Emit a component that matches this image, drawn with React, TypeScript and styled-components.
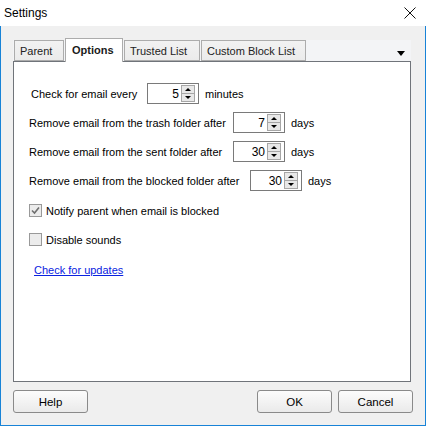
import React from "react";
import styled, { createGlobalStyle } from "styled-components";

const GlobalStyle = createGlobalStyle`
  html, body {
    margin: 0;
    padding: 0;
    background: #ffffff;
  }
  body {
    font-family: "Liberation Sans", Arial, sans-serif;
    font-size: 11px;
    color: #000000;
  }
  * {
    box-sizing: border-box;
  }
`;

const Window = styled.div`
  width: 426px;
  height: 426px;
  display: flex;
  flex-direction: column;
  background: #ffffff;
`;

const TitleBar = styled.div`
  height: 26px;
  flex: none;
  display: flex;
  align-items: center;
  justify-content: space-between;
  padding: 0 10px 0 4px;
  background: #ffffff;
`;

const Title = styled.span`
  font-size: 12px;
  margin-top: -1px;
`;

const CloseIcon = styled.svg`
  width: 12px;
  height: 12px;
  display: block;
`;

const Frame = styled.div`
  flex: 1;
  display: flex;
  flex-direction: column;
  background: #f0f0f0;
  border: 1px solid #1883d7;
  border-top: none;
  padding: 12px 12px 12px 12px;
`;

const TabControl = styled.div`
  flex: 1;
  display: flex;
  flex-direction: column;
  margin-right: 2px;
`;

const TabHeader = styled.div`
  height: 23px;
  flex: none;
  display: flex;
  align-items: flex-end;
  padding-left: 1px;
  background: linear-gradient(to bottom, transparent 2px, #f3f4f6 2px);
`;

const Tab = styled.div<{ $width: number; $active?: boolean }>`
  position: relative;
  width: ${(p) => p.$width}px;
  height: ${(p) => (p.$active ? 24 : 21)}px;
  margin-bottom: ${(p) => (p.$active ? -1 : 0)}px;
  margin-right: 1px;
  padding: ${(p) => (p.$active ? "5px 0 0 6px" : "4px 0 0 5px")};
  border: 1px solid #acacac;
  border-bottom: ${(p) => (p.$active ? "none" : "1px solid #acacac")};
  background: ${(p) => (p.$active ? "#ffffff" : "linear-gradient(#f2f2f2, #ebebeb)")};
  font-weight: ${(p) => (p.$active ? 700 : 400)};
  color: ${(p) => (p.$active ? "#1a1a1a" : "#222222")};
  z-index: ${(p) => (p.$active ? 2 : 1)};
  white-space: nowrap;
`;

const DropArrow = styled.div`
  margin-left: auto;
  margin-right: 6px;
  align-self: center;
  margin-top: 7px;
  width: 0;
  height: 0;
  border-left: 4px solid transparent;
  border-right: 4px solid transparent;
  border-top: 5px solid #000000;
`;

const Panel = styled.div`
  flex: 1;
  background: #ffffff;
  border: 1px solid #70747a;
  display: flex;
  flex-direction: column;
  padding: 21px 0 0 15px;
`;

const Row = styled.div<{ $top?: number; $indent?: number }>`
  display: flex;
  align-items: center;
  height: 21px;
  margin-top: ${(p) => p.$top ?? 0}px;
  padding-left: ${(p) => p.$indent ?? 0}px;
`;

const Label = styled.span<{ $width: number }>`
  width: ${(p) => p.$width}px;
  flex: none;
  white-space: nowrap;
`;

const Unit = styled.span`
  margin-left: 6px;
`;

const SpinBox = styled.div`
  width: 52px;
  height: 21px;
  flex: none;
  display: flex;
  align-items: stretch;
  border: 1px solid #7a7a7a;
  background: #ffffff;
`;

const SpinValue = styled.div`
  flex: 1;
  display: flex;
  align-items: center;
  justify-content: flex-end;
  padding-right: 2px;
  font-size: 12px;
`;

const SpinButtons = styled.div`
  width: 14px;
  margin: 1px 3px 1px 0;
  display: flex;
  flex-direction: column;
  border: 1px solid #a6a6a6;
  background: #e8e8e8;
`;

const SpinHalf = styled.div<{ $down?: boolean }>`
  flex: 1;
  display: flex;
  align-items: center;
  justify-content: center;
  border-top: ${(p) => (p.$down ? "1px solid #a6a6a6" : "none")};
`;

const Triangle = styled.span<{ $down?: boolean }>`
  width: 0;
  height: 0;
  border-left: 3px solid transparent;
  border-right: 3px solid transparent;
  ${(p) =>
    p.$down ? "border-top: 3px solid #000000;" : "border-bottom: 3px solid #000000;"}
`;

const CheckRow = styled.label<{ $top: number }>`
  display: flex;
  align-items: center;
  gap: 4px;
  height: 13px;
  margin-top: ${(p) => p.$top}px;
  white-space: nowrap;
`;

const Box = styled.span`
  width: 13px;
  height: 13px;
  flex: none;
  border: 1px solid #999999;
  background: #ececec;
  display: flex;
  align-items: center;
  justify-content: center;
`;

const Link = styled.a`
  margin-top: 18px;
  margin-left: 5px;
  align-self: flex-start;
  color: #0a22e0;
  text-decoration: underline;
  line-height: 13px;
`;

const ButtonRow = styled.div`
  flex: none;
  display: flex;
  justify-content: space-between;
  margin-top: 8px;
`;

const ButtonGroup = styled.div`
  display: flex;
  gap: 6px;
`;

const Button = styled.button`
  width: 75px;
  height: 23px;
  border: 1px solid #8a8a8a;
  border-radius: 3px;
  background: linear-gradient(#fcfcfc, #eaeaea);
  font-family: "Liberation Sans", Arial, sans-serif;
  font-size: 11.5px;
  color: #000000;
  padding: 0;
`;

function Spinner({ value }: { value: number }) {
  return (
    <SpinBox>
      <SpinValue>{value}</SpinValue>
      <SpinButtons>
        <SpinHalf>
          <Triangle />
        </SpinHalf>
        <SpinHalf $down>
          <Triangle $down />
        </SpinHalf>
      </SpinButtons>
    </SpinBox>
  );
}

function Checkbox({ checked, label, top }: { checked?: boolean; label: string; top: number }) {
  return (
    <CheckRow $top={top}>
      <Box>
        {checked && (
          <svg width="9" height="9" viewBox="0 0 9 9">
            <path d="M1 4.5 L3.5 7 L8 1.5" fill="none" stroke="#6f6f6f" strokeWidth="1.6" />
          </svg>
        )}
      </Box>
      <span>{label}</span>
    </CheckRow>
  );
}

const tabs = [
  { name: "Parent", width: 50 },
  { name: "Options", width: 58, active: true },
  { name: "Trusted List", width: 76 },
  { name: "Custom Block List", width: 105 },
];

export default function App() {
  return (
    <Window>
      <GlobalStyle />
      <TitleBar>
        <Title>Settings</Title>
        <CloseIcon viewBox="0 0 12 12">
          <path d="M0.5 0.5 L11.5 11.5 M11.5 0.5 L0.5 11.5" stroke="#111111" strokeWidth="1" />
        </CloseIcon>
      </TitleBar>
      <Frame>
        <TabControl>
          <TabHeader>
            {tabs.map((t) => (
              <Tab key={t.name} $width={t.width} $active={t.active}>
                {t.name}
              </Tab>
            ))}
            <DropArrow />
          </TabHeader>
          <Panel>
            <Row $indent={2}>
              <Label $width={116}>Check for email every</Label>
              <Spinner value={5} />
              <Unit>minutes</Unit>
            </Row>
            <Row $top={8}>
              <Label $width={204}>Remove email from the trash folder after</Label>
              <Spinner value={7} />
              <Unit>days</Unit>
            </Row>
            <Row $top={8}>
              <Label $width={204}>Remove email from the sent folder after</Label>
              <Spinner value={30} />
              <Unit>days</Unit>
            </Row>
            <Row $top={8}>
              <Label $width={221}>Remove email from the blocked folder after</Label>
              <Spinner value={30} />
              <Unit>days</Unit>
            </Row>
            <Checkbox checked top={13} label="Notify parent when email is blocked" />
            <Checkbox top={16} label="Disable sounds" />
            <Link href="#">Check for updates</Link>
          </Panel>
        </TabControl>
        <ButtonRow>
          <Button>Help</Button>
          <ButtonGroup>
            <Button>OK</Button>
            <Button>Cancel</Button>
          </ButtonGroup>
        </ButtonRow>
      </Frame>
    </Window>
  );
}
